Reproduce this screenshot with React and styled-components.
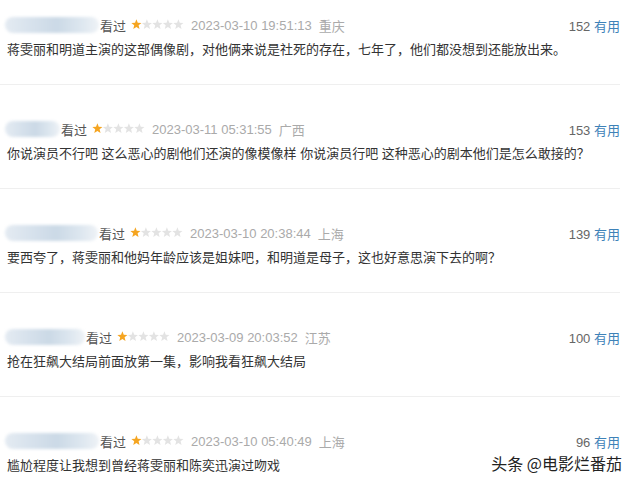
import styled, { createGlobalStyle } from "styled-components";

const comments = [
  {
    nameWidth: 94,
    date: "2023-03-10 19:51:13",
    place: "重庆",
    votes: 152,
    text: "蒋雯丽和明道主演的这部偶像剧，对他俩来说是社死的存在，七年了，他们都没想到还能放出来。",
  },
  {
    nameWidth: 55,
    date: "2023-03-11 05:31:55",
    place: "广西",
    votes: 153,
    text: "你说演员不行吧 这么恶心的剧他们还演的像模像样 你说演员行吧 这种恶心的剧本他们是怎么敢接的？",
  },
  {
    nameWidth: 93,
    date: "2023-03-10 20:38:44",
    place: "上海",
    votes: 139,
    text: "要西夸了，蒋雯丽和他妈年龄应该是姐妹吧，和明道是母子，这也好意思演下去的啊？",
  },
  {
    nameWidth: 80,
    date: "2023-03-09 20:03:52",
    place: "江苏",
    votes: 100,
    text: "抢在狂飙大结局前面放第一集，影响我看狂飙大结局",
  },
  {
    nameWidth: 94,
    date: "2023-03-10 05:40:49",
    place: "上海",
    votes: 96,
    text: "尴尬程度让我想到曾经蒋雯丽和陈奕迅演过吻戏",
  },
];

const GlobalStyle = createGlobalStyle`
  body {
    margin: 0;
    background: #fff;
    overflow: hidden;
  }
`;

const starPoints = (cx) => {
  const pts = [];
  for (let i = 0; i < 10; i++) {
    const r = i % 2 === 0 ? 5.3 : 2.3;
    const a = (Math.PI / 5) * i - Math.PI / 2;
    pts.push(`${(cx + r * Math.cos(a)).toFixed(2)},${(5.6 + r * Math.sin(a)).toFixed(2)}`);
  }
  return pts.join(" ");
};

const Stars = ({ filled }) => (
  <StarSvg width="53" height="11" viewBox="0 0 53 11">
    {[0, 1, 2, 3, 4].map((i) => (
      <polygon
        key={i}
        points={starPoints(5.4 + i * 10.5)}
        fill={i < filled ? "#f5a521" : "#e3e3e3"}
      />
    ))}
  </StarSvg>
);

const CommentItem = ({ nameWidth, date, place, votes, text }) => (
  <Item>
    <Header>
      <UserName style={{ width: nameWidth }} />
      <Watched>看过</Watched>
      <Stars filled={1} />
      <Meta>{date}</Meta>
      <Meta>{place}</Meta>
      <Votes>
        {votes} <Useful>有用</Useful>
      </Votes>
    </Header>
    <Body>{text}</Body>
  </Item>
);

const App = () => (
  <Page>
    <GlobalStyle />
    <List>
      {comments.map((c, i) => (
        <CommentItem key={i} {...c} />
      ))}
    </List>
    <Watermark>头条 @电影烂番茄</Watermark>
  </Page>
);

const Page = styled.div`
  position: relative;
  width: 640px;
  height: 484px;
  overflow: hidden;
  font-family: "Liberation Sans", "Noto Sans CJK SC", sans-serif;
`;

const List = styled.div`
  width: 620px;
  margin-top: -19px;
`;

const Item = styled.div`
  padding: 34px 0 24px 7px;
  border-bottom: 1px solid #efefef;
`;

const Header = styled.div`
  display: flex;
  align-items: center;
  height: 20px;
  font-size: 13px;
`;

const UserName = styled.span`
  height: 16px;
  margin-left: -2px;
  border-radius: 8px;
  background: linear-gradient(
    90deg,
    #e4ebf2 0%,
    #d6e1ec 30%,
    #cbd9e6 55%,
    #dce6ef 80%,
    #eef2f6 100%
  );
  filter: blur(1.5px);
`;

const Watched = styled.span`
  color: #555;
  margin-left: 1px;
`;

const StarSvg = styled.svg`
  margin: 0 0 1px 5px;
`;

const Meta = styled.span`
  color: #aaa;
  margin-left: 7px;
`;

const Votes = styled.span`
  margin-left: auto;
  color: #666;
`;

const Useful = styled.span`
  color: #3e82b8;
`;

const Body = styled.div`
  margin-top: 5px;
  font-size: 13px;
  line-height: 20px;
  color: #333;
  white-space: nowrap;
`;

const Watermark = styled.div`
  position: absolute;
  right: 18px;
  top: 453px;
  font-size: 16px;
  line-height: 20px;
  color: #222;
  font-family: "Noto Sans CJK SC", sans-serif;
  text-shadow: 0 0 2px #fff, 0 0 2px #fff;
`;

export default App;
